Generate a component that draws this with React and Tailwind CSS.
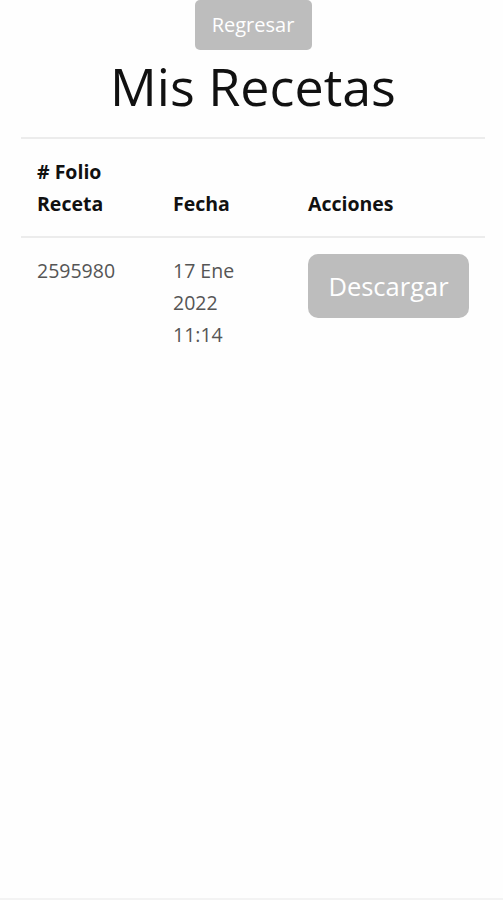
export default function App() {
  const rows = [{ folio: '2595980', fecha: ['17 Ene', '2022', '11:14'] }];

  return (
    <div className="min-h-[900px] bg-[#fefefe] flex flex-col" style={{ fontFamily: '"Open Sans", "Noto Sans", sans-serif' }}>
      <div className="flex-1 pl-[21px] pr-[18px]">
        <div className="flex justify-center">
          <button className="w-[117px] h-[50px] bg-[#bdbdbd] text-white text-[20px] rounded-[5px]">
            Regresar
          </button>
        </div>
        <h1 className="text-center text-[52px] leading-[72px] text-[#111] mt-0 mb-[15px]">Mis Recetas</h1>

        <table className="w-full text-left">
          <thead>
            <tr className="border-t-2 border-b-2 border-[#ececec]">
              <th className="w-[136px] pl-4 pt-[17px] pb-4 align-bottom text-[19.5px] leading-[32px] font-bold text-[#111]">
                # Folio<br />Receta
              </th>
              <th className="w-[135px] pl-4 pt-[17px] pb-4 align-bottom text-[19.5px] leading-[32px] font-bold text-[#111]">Fecha</th>
              <th className="pl-4 pt-[17px] pb-4 align-bottom text-[19.5px] leading-[32px] font-bold text-[#111]">Acciones</th>
            </tr>
          </thead>
          <tbody>
            {rows.map((r) => (
              <tr key={r.folio}>
                <td className="pl-4 pt-[17px] align-top text-[19.5px] leading-[32px] text-[#555]">{r.folio}</td>
                <td className="pl-4 pt-[17px] align-top text-[19.5px] leading-[32px] text-[#555]">
                  {r.fecha.map((f) => (
                    <div key={f}>{f}</div>
                  ))}
                </td>
                <td className="pl-4 pt-4 align-top">
                  <button className="w-[161px] h-[64px] bg-[#bdbdbd] text-white text-[25.5px] rounded-[10px]">Descargar</button>
                </td>
              </tr>
            ))}
          </tbody>
        </table>
      </div>
      <div className="h-[2px] bg-[#f3f3f3]" />
    </div>
  );
}
